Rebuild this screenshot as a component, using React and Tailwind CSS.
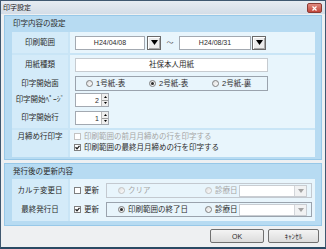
import React from "react";

function DropBtn({ disabled }) {
  return (
    <div
      className={`w-[14px] h-[14px] flex items-center justify-center border ${
        disabled
          ? "border-[#cdd1d6] bg-[#f3f4f5]"
          : "border-[#6a6a6a] bg-[#ececec] shadow-[inset_1px_1px_0_#ffffff,inset_-1px_-1px_0_#a8a8a8]"
      }`}
    >
      <svg width="7" height="5" viewBox="0 0 7 5">
        <path d="M0 0H7L3.5 5Z" fill={disabled ? "#9c9c9c" : "#000"} />
      </svg>
    </div>
  );
}

function Radio({ checked, disabled }) {
  return (
    <span
      className={`w-[7px] h-[7px] rounded-full border flex items-center justify-center bg-gradient-to-br from-[#dcdcdc] to-[#ffffff] ${
        disabled ? "border-[#c3c3c3]" : "border-[#7f7f7f]"
      }`}
    >
      {checked && <span className="w-[3px] h-[3px] rounded-full bg-[#2a2a2a]" />}
    </span>
  );
}

function Check({ checked, disabled }) {
  return (
    <span
      className={`w-[7px] h-[7px] border flex items-center justify-center bg-white ${
        disabled ? "border-[#c3c3c3]" : "border-[#7f7f7f]"
      }`}
    >
      {checked && (
        <svg width="5" height="5" viewBox="0 0 5 5">
          <path d="M0.5 2.3L2 3.8L4.5 0.8" stroke="#1e1e1e" strokeWidth="1.3" fill="none" />
        </svg>
      )}
    </span>
  );
}

function Spin({ v }) {
  return (
    <div className="w-[34px] h-[14px] bg-white border border-[#a3a9b1] flex">
      <div className="flex-1 flex items-center justify-end pr-[2px] text-[7px]">{v}</div>
      <div className="w-[7px] flex flex-col border-l border-[#b9b9b9]">
        <div className="flex-1 flex items-center justify-center bg-[#eeeeee] border-b border-[#9e9e9e]">
          <svg width="3" height="2" viewBox="0 0 3 2">
            <path d="M0 2H3L1.5 0Z" fill="#000" />
          </svg>
        </div>
        <div className="flex-1 flex items-center justify-center bg-[#eeeeee]">
          <svg width="3" height="2" viewBox="0 0 3 2">
            <path d="M0 0H3L1.5 2Z" fill="#000" />
          </svg>
        </div>
      </div>
    </div>
  );
}

function Label({ children, className = "" }) {
  return (
    <div className={`w-[56px] flex justify-center text-[7.5px] ${className}`}>{children}</div>
  );
}

function Combo() {
  return (
    <div className="w-[68px] h-[12px] border border-[#c9cdd2] bg-white flex justify-end">
      <div className="w-[12px] h-full border-l border-[#d3d6da] bg-[#f1f2f3] flex items-center justify-center">
        <svg width="6" height="4" viewBox="0 0 6 4">
          <path d="M0 0H6L3 4Z" fill="#a3a3a3" />
        </svg>
      </div>
    </div>
  );
}

export default function App() {
  return (
    <div className="w-[326px] h-[249px] flex flex-col border border-[#3f5870] border-b-[2px] border-b-[#2a4a64] bg-[#eceff2] font-['Liberation_Sans','Noto_Sans_CJK_JP',sans-serif] text-[#2b2b2b] leading-none overflow-hidden">
      {/* title bar */}
      <div className="h-[13px] flex items-center justify-between pl-[2px] pr-[3px] bg-gradient-to-b from-[#e6ecf2] to-[#d4dde7]">
        <span className="text-[7px] text-[#1a1a1a]">印字設定</span>
        <div className="w-[15px] h-[10px] mt-[1px] rounded-[2px] border border-[#8a3b34] bg-gradient-to-b from-[#e08a80] to-[#c2453a] flex items-center justify-center">
          <svg width="5" height="5" viewBox="0 0 5 5">
            <path d="M0.5 0.5L4.5 4.5M4.5 0.5L0.5 4.5" stroke="#fff" strokeWidth="1.2" />
          </svg>
        </div>
      </div>

      <div className="flex-1 flex flex-col px-[3px] pt-[1px] bg-[#eef0f2]">
        {/* panel 1 */}
        <div className="h-[145px] border border-[#97c8e8] bg-[#b7dbf2] flex flex-col pl-[7px] pr-[6px] pb-[2px]">
          <div className="h-[16px] flex items-center pl-[1px] text-[7.5px]">印字内容の設定</div>
          <div className="flex flex-col gap-[2px] bg-[#c9e5f6]">
            {/* group A */}
            <div className="h-[21px] flex gap-[2px]">
              <Label className="items-center bg-[#d4ebf9]">印刷範囲</Label>
              <div className="flex-1 bg-[#e8f5fc] flex items-center pl-[5px]">
                <div className="w-[70px] h-[14px] bg-white border border-[#a3a9b1] flex items-center justify-center text-[7px]">
                  H24/04/08
                </div>
                <div className="ml-[2px]">
                  <DropBtn />
                </div>
                <div className="w-[18px] flex justify-center text-[7px] text-[#555]">～</div>
                <div className="w-[72px] h-[14px] bg-white border border-[#a3a9b1] flex items-center justify-center text-[7px]">
                  H24/08/31
                </div>
                <div className="ml-[1px]">
                  <DropBtn />
                </div>
              </div>
            </div>

            {/* group B */}
            <div className="h-[73px] flex gap-[2px]">
              <div className="w-[56px] flex flex-col bg-[#d4ebf9]">
                <Label className="h-[20px] items-center">用紙種類</Label>
                <Label className="h-[17px] items-center">印字開始面</Label>
                <Label className="h-[16px] items-center">印字開始ﾍﾟｰｼﾞ</Label>
                <Label className="h-[20px] items-center">印字開始行</Label>
              </div>
              <div className="flex-1 flex flex-col bg-[#e8f5fc] pl-[5px]">
                <div className="h-[20px] flex items-center">
                  <div className="w-[193px] h-[14px] bg-white border border-[#c6cbd0] flex items-center justify-center text-[7.5px]">
                    社保本人用紙
                  </div>
                </div>
                <div className="h-[17px] flex items-center">
                  <div className="w-[193px] h-[15px] border border-[#9aa3ad] flex items-center pl-[10px] text-[7.5px]">
                    <div className="w-[63px] flex items-center gap-[3px]">
                      <Radio />
                      <span>1号紙-表</span>
                    </div>
                    <div className="w-[63px] flex items-center gap-[3px]">
                      <Radio checked />
                      <span>2号紙-表</span>
                    </div>
                    <div className="flex items-center gap-[3px]">
                      <Radio />
                      <span>2号紙-裏</span>
                    </div>
                  </div>
                </div>
                <div className="h-[16px] flex items-center">
                  <Spin v="2" />
                </div>
                <div className="h-[20px] flex items-center">
                  <Spin v="1" />
                </div>
              </div>
            </div>

            {/* group C */}
            <div className="h-[27px] flex gap-[2px]">
              <Label className="items-start pt-[3px] bg-[#d4ebf9]">月締め行印字</Label>
              <div className="flex-1 flex flex-col bg-[#e8f5fc] pl-[4px] pt-[1px] text-[7.5px]">
                <div className="h-[11px] flex items-center gap-[3px] text-[#a6a6a6]">
                  <Check disabled />
                  <span>印刷範囲の前月月締めの行を印字する</span>
                </div>
                <div className="h-[11px] flex items-center gap-[3px]">
                  <Check checked />
                  <span>印刷範囲の最終月月締めの行を印字する</span>
                </div>
              </div>
            </div>
          </div>
        </div>

        {/* panel 2 */}
        <div className="mt-[3px] h-[63px] border border-[#97c8e8] bg-[#b7dbf2] flex flex-col pl-[7px] pr-[6px] pb-[4px]">
          <div className="h-[15px] flex items-center pl-[1px] text-[7.5px]">発行後の更新内容</div>
          <div className="h-[42px] flex gap-[2px] bg-[#c9e5f6]">
            <div className="w-[56px] flex flex-col pt-[2px] bg-[#d4ebf9]">
              <Label className="h-[19px] items-center">カルテ変更日</Label>
              <Label className="h-[19px] items-center">最終発行日</Label>
            </div>
            <div className="flex-1 flex flex-col pt-[2px] bg-[#e8f5fc] text-[7.5px]">
              <div className="h-[19px] flex items-center">
                <div className="w-[36px] pl-[4px] flex items-center gap-[3px]">
                  <Check />
                  <span>更新</span>
                </div>
                <div className="w-[206px] h-[15px] border border-[#c3c9d0] flex items-center pl-[11px] pr-[4px] text-[#a6a6a6]">
                  <div className="w-[87px] flex items-center gap-[3px]">
                    <Radio disabled />
                    <span>クリア</span>
                  </div>
                  <div className="flex items-center gap-[3px]">
                    <Radio disabled />
                    <span>診療日</span>
                  </div>
                  <div className="ml-auto">
                    <Combo />
                  </div>
                </div>
              </div>
              <div className="h-[19px] flex items-center">
                <div className="w-[36px] pl-[4px] flex items-center gap-[3px]">
                  <Check checked />
                  <span>更新</span>
                </div>
                <div className="w-[206px] h-[15px] border border-[#9aa3ad] flex items-center pl-[11px] pr-[4px]">
                  <div className="w-[87px] flex items-center gap-[3px]">
                    <Radio checked />
                    <span>印刷範囲の終了日</span>
                  </div>
                  <div className="flex items-center gap-[3px]">
                    <Radio />
                    <span>診療日</span>
                  </div>
                  <div className="ml-auto">
                    <Combo />
                  </div>
                </div>
              </div>
            </div>
          </div>
        </div>

        {/* buttons */}
        <div className="mt-[3px] flex justify-end gap-[4px] pr-[3px]">
          <div className="w-[54px] h-[14px] rounded-[2px] border border-[#707070] bg-gradient-to-b from-[#f4f4f4] to-[#dcdcdc] flex items-center justify-center text-[7px]">
            OK
          </div>
          <div className="w-[51px] h-[14px] rounded-[2px] border border-[#707070] bg-gradient-to-b from-[#f4f4f4] to-[#dcdcdc] flex items-center justify-center text-[7px]">
            ｷｬﾝｾﾙ
          </div>
        </div>
      </div>
    </div>
  );
}
